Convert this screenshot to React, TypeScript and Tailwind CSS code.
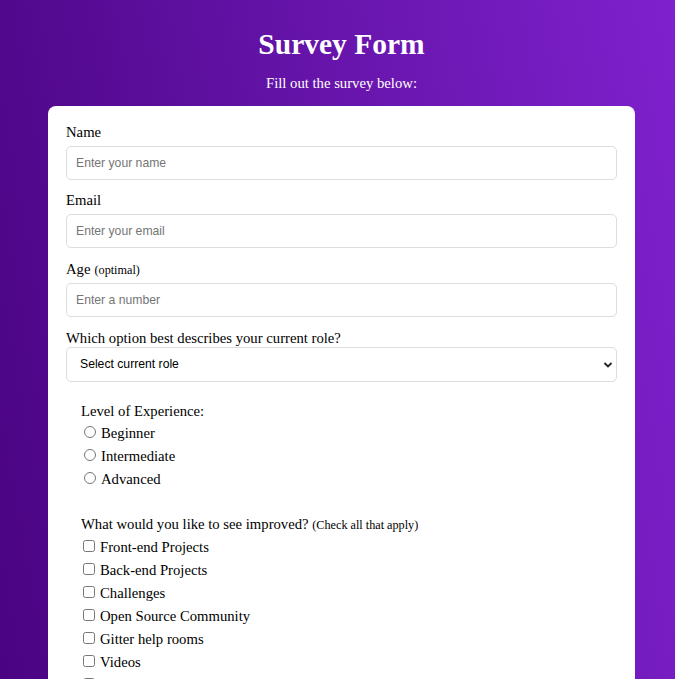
import React from "react";

const serif = "font-['Liberation_Serif','Times_New_Roman',serif]";
const sans = "font-['Liberation_Sans',Arial,sans-serif]";

const inputBase = `h-[34px] w-full rounded-[5px] border border-[#dddddd] px-[9px] text-[12.2px] ${sans} placeholder:text-[#757575] outline-none`;

export default function App() {
  const radios = ["Beginner", "Intermediate", "Advanced"];
  const checks = [
    "Front-end Projects",
    "Back-end Projects",
    "Challenges",
    "Open Source Community",
    "Gitter help rooms",
    "Videos",
    "City Meetups",
    "Wiki",
    "Forum",
  ];
  return (
    <div
      className={`min-h-screen bg-fixed bg-linear-80 from-[#4a0482] to-[#7f21ce] ${serif} text-black`}
    >
      <div className="pt-[27px] pb-10 pl-[8px] flex flex-col items-center">
        <h1 className="text-[29.5px] font-bold text-white leading-[34px]">Survey Form</h1>
        <p className="text-[14.7px] text-white mt-[13px] leading-[18px]">Fill out the survey below:</p>
        <form className="mt-[14px] w-[587px] bg-white rounded-[8px] px-[18px] pt-[17px] pb-6">
          <div className="flex flex-col">
            <label className="text-[14.7px] leading-[18px]">Name</label>
            <input className={`mt-[5px] ${inputBase}`} placeholder="Enter your name" />
            <label className="mt-[11px] text-[14.7px] leading-[18px]">Email</label>
            <input className={`mt-[5px] ${inputBase}`} placeholder="Enter your email" />
            <label className="mt-[12px] text-[14.7px] leading-[18px] flex items-baseline gap-[4px]">
              <span>Age</span>
              <span className="text-[12.2px]">(optimal)</span>
            </label>
            <input className={`mt-[4px] ${inputBase}`} placeholder="Enter a number" />
            <label className="mt-[12px] text-[14.7px] leading-[18px]">
              Which option best describes your current role?
            </label>
            <div className="relative">
              <select
                className={`appearance-none h-[35px] w-full rounded-[5px] border border-[#dddddd] pl-[13px] text-[12.2px] ${sans} text-black bg-white outline-none`}
              >
                <option>Select current role</option>
              </select>
              <svg
                className="pointer-events-none absolute right-[4px] top-[13px]"
                width="10"
                height="10"
                viewBox="0 0 10 10"
              >
                <path d="M1.5 3 L5 6.5 L8.5 3" fill="none" stroke="#222" strokeWidth="1.8" />
              </svg>
            </div>
          </div>

          <div className="mt-[20px] pl-[15px]">
            <p className="text-[14.7px] leading-[18px]">Level of Experience:</p>
            <div className="mt-[2px] flex flex-col">
              {radios.map((r) => (
                <label key={r} className="flex items-center h-[23px] text-[14.7px]">
                  <input type="radio" name="exp" className="ml-[3px] mr-[5px] w-[12px] h-[12px] -mt-[4px] accent-[#555]" />
                  {r}
                </label>
              ))}
            </div>
          </div>

          <div className="mt-[24px] pl-[15px]">
            <p className="text-[14.7px] leading-[18px]">
              What would you like to see improved? <span className="text-[12.2px]">(Check all that apply)</span>
            </p>
            <div className="mt-[2px] flex flex-col">
              {checks.map((c) => (
                <label key={c} className="flex items-center h-[23px] text-[14.7px]">
                  <input type="checkbox" className="ml-[2px] mr-[5px] w-[12px] h-[12px] -mt-[4px]" />
                  {c}
                </label>
              ))}
            </div>
          </div>
        </form>
      </div>
    </div>
  );
}
